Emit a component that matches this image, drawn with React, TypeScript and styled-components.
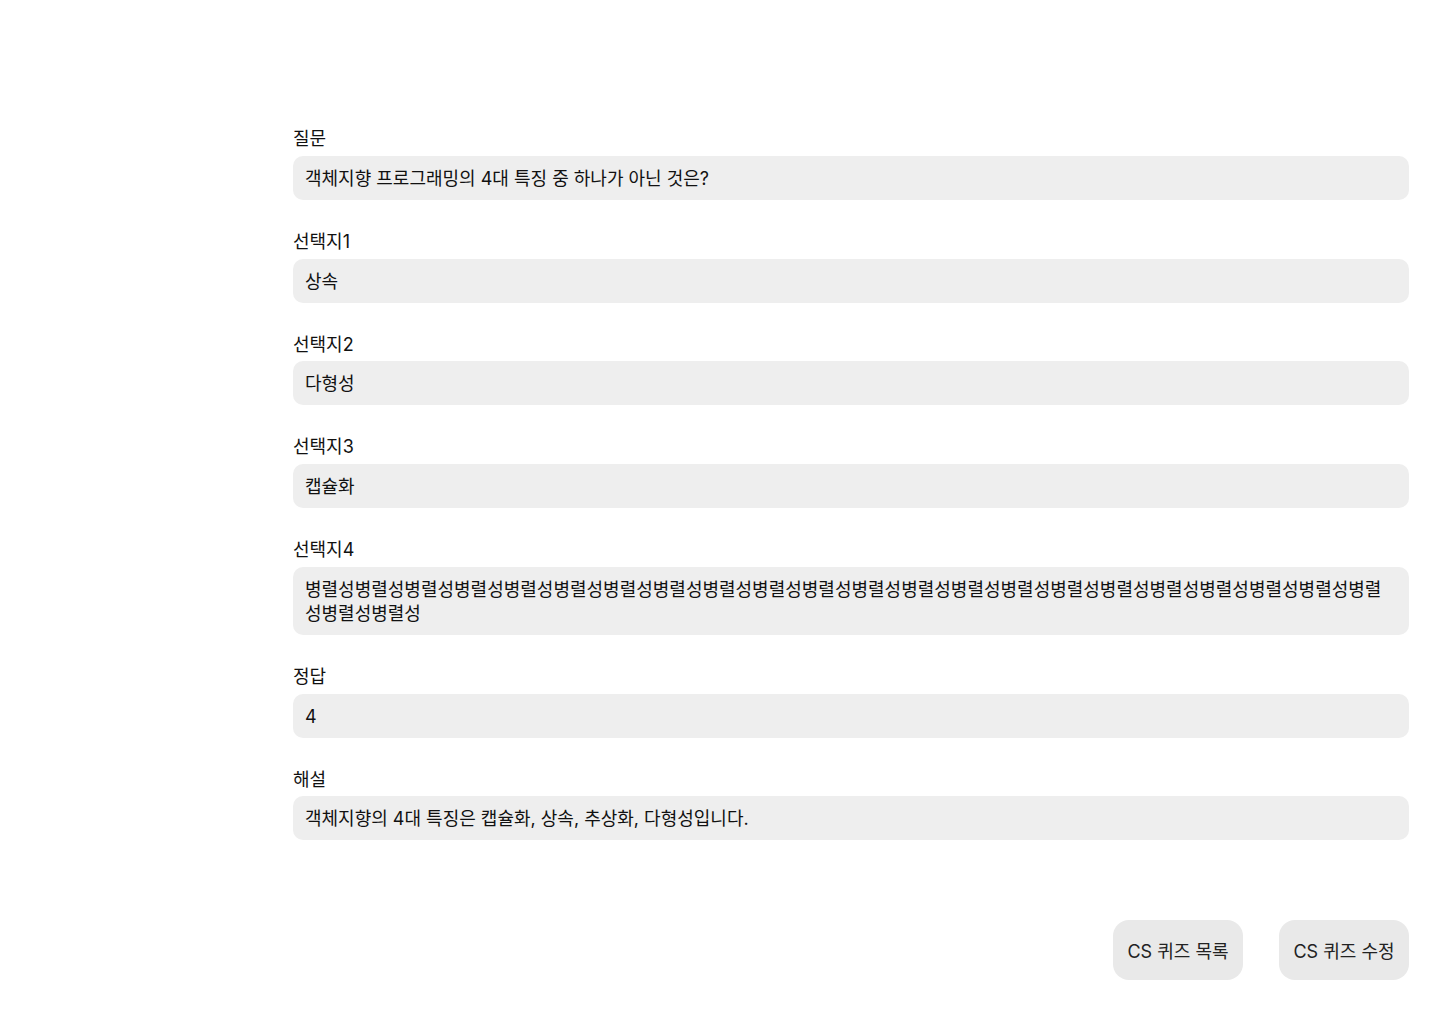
import React from "react";
import styled, { createGlobalStyle } from "styled-components";

const GlobalStyle = createGlobalStyle`
  html, body {
    margin: 0;
    padding: 0;
    background: #ffffff;
  }
  body {
    font-family: Inter, "Noto Sans CJK KR", sans-serif;
    color: #111111;
  }
  * { box-sizing: border-box; }
`;

const Page = styled.main`
  width: 1440px;
  min-height: 1024px;
  padding: 128px 31px 0 293px;
  display: flex;
  flex-direction: column;
`;

const Form = styled.div`
  display: flex;
  flex-direction: column;
  gap: 31px;
`;

const Group = styled.div`
  display: flex;
  flex-direction: column;
  gap: 5px;
`;

const Label = styled.div`
  font-size: 18px;
  line-height: 22.75px;
  color: #111111;
`;

const Field = styled.div`
  background: #eeeeee;
  border-radius: 10px;
  padding: 11px 12px 9px;
  font-size: 18px;
  line-height: 24px;
  color: #111111;
  word-break: break-all;
  min-height: 44px;
`;

const Actions = styled.div`
  display: flex;
  justify-content: flex-end;
  gap: 36px;
  margin-top: 80px;
`;

const Button = styled.button`
  width: 130px;
  height: 60px;
  border: none;
  border-radius: 16px;
  background: #e9e9e9;
  color: #222222;
  font-family: Inter, "Noto Sans CJK KR", sans-serif;
  font-size: 18px;
  cursor: pointer;
  padding: 0;
`;

const fields: { label: string; value: string }[] = [
  { label: "질문", value: "객체지향 프로그래밍의 4대 특징 중 하나가 아닌 것은?" },
  { label: "선택지1", value: "상속" },
  { label: "선택지2", value: "다형성" },
  { label: "선택지3", value: "캡슐화" },
  { label: "선택지4", value: "병렬성".repeat(24) },
  { label: "정답", value: "4" },
  { label: "해설", value: "객체지향의 4대 특징은 캡슐화, 상속, 추상화, 다형성입니다." },
];

export default function App() {
  return (
    <>
      <GlobalStyle />
      <Page>
        <Form>
          {fields.map((f) => (
            <Group key={f.label}>
              <Label>{f.label}</Label>
              <Field>{f.value}</Field>
            </Group>
          ))}
        </Form>
        <Actions>
          <Button>CS 퀴즈 목록</Button>
          <Button>CS 퀴즈 수정</Button>
        </Actions>
      </Page>
    </>
  );
}
